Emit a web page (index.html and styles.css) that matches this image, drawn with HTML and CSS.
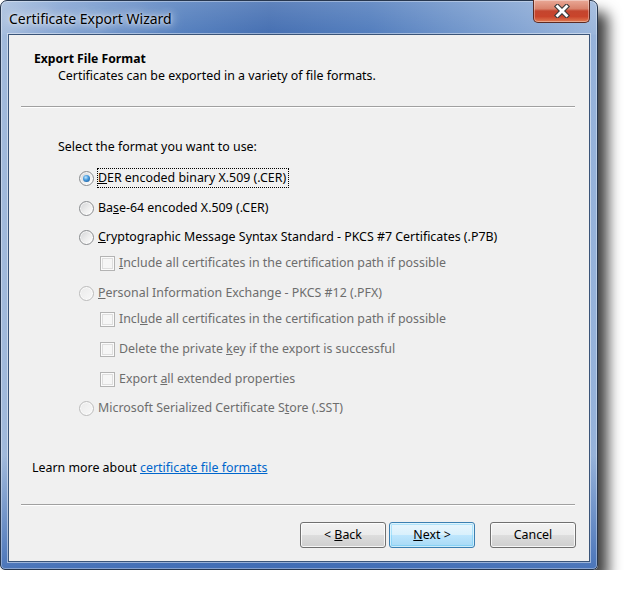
FILE: index.html
```html
<!DOCTYPE html>
<html>
<head>
<meta charset="utf-8">
<link rel="stylesheet" href="styles.css">
</head>
<body>
<div class="window">
  <div class="titlebar">
    <span class="title">Certificate Export Wizard</span>
    <div class="close">
      <svg width="18" height="14" viewBox="0 0 18 14">
        <path d="M4.5 2.5 L13.5 11.5 M13.5 2.5 L4.5 11.5" stroke="#3b3b3b" stroke-width="5" stroke-linecap="square" fill="none"/>
        <path d="M4.5 2.5 L13.5 11.5 M13.5 2.5 L4.5 11.5" stroke="#ffffff" stroke-width="2.8" stroke-linecap="square" fill="none"/>
      </svg>
    </div>
  </div>
  <div class="client">
    <div class="header">
      <div class="h-title">Export File Format</div>
      <div class="h-sub">Certificates can be exported in a variety of file formats.</div>
    </div>
    <div class="sep sep-top"></div>
    <div class="body">
      <div class="prompt">Select the format you want to use:</div>
      <div class="row radio-row m13"><span class="radio on"></span><span class="lbl focus"><u>D</u>ER encoded binary X.509 (.CER)</span></div>
      <div class="row radio-row m10"><span class="radio"></span><span class="lbl">Ba<u>s</u>e-64 encoded X.509 (.CER)</span></div>
      <div class="row radio-row m9"><span class="radio"></span><span class="lbl"><u>C</u>ryptographic Message Syntax Standard - PKCS #7 Certificates (.P7B)</span></div>
      <div class="row check-row m6 dis"><span class="check"></span><span class="lbl"><u>I</u>nclude all certificates in the certification path if possible</span></div>
      <div class="row radio-row m10 dis"><span class="radio"></span><span class="lbl"><u>P</u>ersonal Information Exchange - PKCS #12 (.PFX)</span></div>
      <div class="row check-row m6 dis"><span class="check"></span><span class="lbl">Incl<u>u</u>de all certificates in the certification path if possible</span></div>
      <div class="row check-row m10 dis"><span class="check"></span><span class="lbl">Delete the private <u>k</u>ey if the export is successful</span></div>
      <div class="row check-row m10 dis"><span class="check"></span><span class="lbl">Export <u>a</u>ll extended properties</span></div>
      <div class="row radio-row m9 dis"><span class="radio"></span><span class="lbl">Microsoft Serialized Certificate S<u>t</u>ore (.SST)</span></div>
    </div>
    <div class="learn">Learn more about <a href="#" class="link">certificate file formats</a></div>
    <div class="sep sep-bottom"></div>
    <div class="buttons">
      <div class="btn"><span>&lt; <u>B</u>ack</span></div>
      <div class="btn default"><span><u>N</u>ext &gt;</span></div>
      <div class="btn cancel"><span>Cancel</span></div>
    </div>
  </div>
</div>
</body>
</html>
```

FILE: styles.css
```css
html, body {
  margin: 0;
  padding: 0;
  background: #ffffff;
}
body {
  font-family: "Noto Sans", "Open Sans", sans-serif;
  font-size: 12.4px;
  color: #000;
}
.window {
  width: 598px;
  height: 570px;
  box-sizing: border-box;
  border: 1px solid #27374f;
  border-radius: 7px 7px 5px 5px;
  display: flex;
  flex-direction: column;
  background:
    linear-gradient(to bottom, rgba(255,255,255,0.18) 0px, rgba(255,255,255,0.05) 33px, rgba(0,0,0,0) 34px),
    linear-gradient(to bottom, rgba(74,118,185,0) 0%, rgba(74,118,185,0) 80%, rgba(66,110,182,0.9) 100%),
    linear-gradient(to right, #a3bbdc 0%, #7d9fd0 10%, #4f7cbd 28%, #3c68ae 45%, #4a77ba 62%, #6f95cb 80%, #97b3da 100%);
  box-shadow: 10px 12px 14px rgba(0,0,0,0.75), inset 0 0 0 1px rgba(255,255,255,0.35);
}
.titlebar {
  height: 33px;
  display: flex;
  align-items: flex-start;
}
.title {
  margin-left: 8px;
  margin-top: 8px;
  font-size: 14px;
  line-height: 20px;
  color: #000;
  text-shadow: 0 0 8px rgba(255,255,255,0.95), 0 0 14px rgba(255,255,255,0.8), 0 0 3px rgba(255,255,255,0.7);
}
.close {
  margin-left: auto;
  margin-right: 7px;
  margin-top: -1px;
  width: 57px;
  height: 23px;
  box-sizing: border-box;
  border: 1px solid #5c2a22;
  border-top: none;
  border-radius: 0 0 5px 5px;
  background: linear-gradient(to bottom, #e9a997 0%, #d9826c 40%, #c4452e 50%, #c9442b 75%, #e07a52 100%);
  box-shadow: inset 0 0 0 1px rgba(255,255,255,0.35);
  display: flex;
  align-items: center;
  justify-content: center;
}
.close svg { display: block; }
.client {
  flex: 1;
  margin: 0 7px 7px 7px;
  background: #f0f0f0;
  border: 1px solid #3a5478;
  box-shadow: 0 0 0 1px rgba(255,255,255,0.45);
  display: flex;
  flex-direction: column;
}
.header {
  padding: 16px 0 0 25px;
}
.h-title {
  font-weight: bold;
  font-size: 12.2px;
  line-height: 16px;
}
.h-sub {
  margin-top: 1px;
  padding-left: 24px;
  line-height: 16px;
}
.sep {
  height: 1px;
  background: #a0a0a0;
  border-bottom: 1px solid #ffffff;
  margin-left: 12px;
  margin-right: 14px;
}
.sep-top { margin-top: 22px; }
.body {
  padding-left: 49px;
  margin-top: 31px;
  display: flex;
  flex-direction: column;
}
.prompt { line-height: 16px; }
.row {
  height: 20px;
  display: flex;
  align-items: center;
}
.radio-row { padding-left: 21px; }
.check-row { padding-left: 42px; }
.m13 { margin-top: 13px; }
.m10 { margin-top: 10px; }
.m9 { margin-top: 9px; }
.m6 { margin-top: 6px; }
.row .lbl {
  margin-left: 3px;
  border: 1px dotted transparent;
  line-height: 18px;
  padding: 0 2px 0 0;
}
.row .lbl.focus { border-color: #000; }
.row.dis .lbl { color: #6d6d6d; }
.radio {
  width: 13px;
  height: 13px;
  border-radius: 50%;
  border: 1px solid #8a8c8f;
  background: linear-gradient(135deg, #d2d3d5 0%, #eeeeee 55%, #ffffff 100%);
  box-shadow: inset 0 0 0 1px rgba(255,255,255,0.7);
  position: relative;
  flex: none;
}
.radio.on::after {
  content: "";
  position: absolute;
  left: 3px;
  top: 3px;
  width: 7px;
  height: 7px;
  border-radius: 50%;
  background: radial-gradient(circle at 40% 35%, #c5e6fb 0%, #4a9ee0 40%, #1a5d9e 85%, #174f86 100%);
}
.dis .radio {
  border-color: #bcbcbc;
  background: linear-gradient(135deg, #eaeaea, #f8f8f8);
}
.check {
  width: 13px;
  height: 13px;
  border: 1px solid #b3b3b3;
  background: #f6f6f6;
  box-shadow: inset 0 0 0 1px #fbfbfb, inset 0 0 0 2px #dedede;
  flex: none;
}
.learn {
  margin-top: 42px;
  padding-left: 23px;
  line-height: 16px;
}
.link {
  color: #0066cc;
  text-decoration: underline;
}
.sep-bottom { margin-top: 28px; }
.buttons {
  margin-top: 16px;
  display: flex;
  justify-content: flex-end;
  padding-right: 13px;
}
.btn {
  width: 86px;
  height: 26px;
  box-sizing: border-box;
  border: 1px solid #707070;
  border-radius: 3px;
  background: linear-gradient(to bottom, #f2f2f2 0%, #ebebeb 50%, #dddddd 51%, #cfcfcf 100%);
  box-shadow: inset 0 0 0 1px rgba(255,255,255,0.8);
  display: flex;
  align-items: center;
  justify-content: center;
  line-height: 16px;
}
.btn.default {
  margin-left: 3px;
  border-color: #3c7fb1;
  background: linear-gradient(to bottom, #eaf6fd 0%, #d9f0fc 50%, #bee6fd 51%, #a7d9f5 100%);
  box-shadow: inset 0 0 0 1px rgba(255,255,255,0.6), inset 0 0 0 2px rgba(72,196,245,0.35);
}
.btn.cancel { margin-left: 15px; }
```
